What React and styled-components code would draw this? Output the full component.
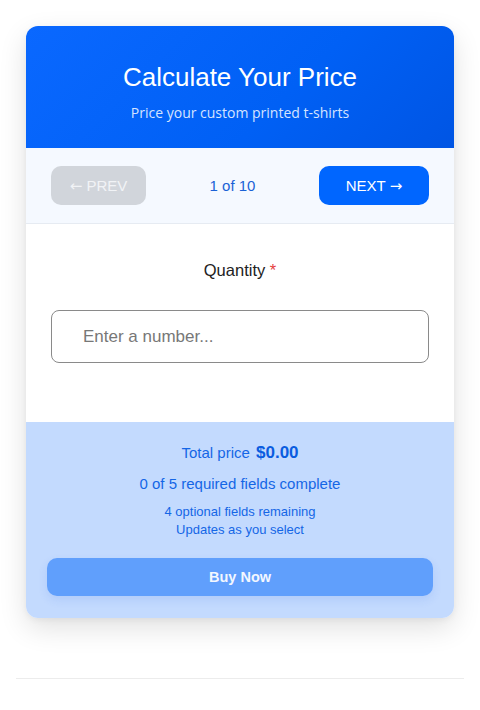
import styled, { createGlobalStyle } from "styled-components";

const Global = createGlobalStyle`
  body {
    margin: 0;
    background: #ffffff;
    font-family: "Liberation Sans", Arial, sans-serif;
  }
`;

const Page = styled.div`
  padding: 26px 16px 0;
`;

const Card = styled.section`
  margin: 0 10px;
  border-radius: 12px;
  overflow: hidden;
  background: #ffffff;
  box-shadow: 0 10px 28px rgba(0, 0, 0, 0.12), 0 2px 6px rgba(0, 0, 0, 0.05);
`;

const Header = styled.header`
  height: 122px;
  box-sizing: border-box;
  padding-top: 36px;
  text-align: center;
  color: #fff;
  background: linear-gradient(135deg, #0a68ff 0%, #0060f5 60%, #0055e4 100%);
`;

const Title = styled.h1`
  margin: 0;
  font-size: 26px;
  font-weight: 400;
  line-height: 30px;
`;

const Subtitle = styled.p`
  margin: 12px 0 0;
  font-family: "Open Sans", "Noto Sans", sans-serif;
  font-size: 14px;
  line-height: 18px;
  color: #d6e4ff;
`;

const Nav = styled.nav`
  display: flex;
  align-items: center;
  justify-content: space-between;
  padding: 18px 25px;
  background: #f5f9ff;
  border-bottom: 1px solid #e6ebf2;
`;

const NavButton = styled.button`
  height: 39px;
  width: ${(p) => p.$width}px;
  border: none;
  border-radius: 10px;
  font-family: "Liberation Sans", Arial, sans-serif;
  font-size: 15px;
  color: ${(p) => (p.disabled ? "#f1f3f6" : "#ffffff")};
  background: ${(p) => (p.disabled ? "#d1d5db" : "#0066ff")};
  cursor: ${(p) => (p.disabled ? "default" : "pointer")};
`;

const Arrow = styled.span`
  font-family: "DejaVu Sans", sans-serif;
  font-size: 15px;
`;

const Step = styled.span`
  font-size: 15px;
  color: #1a62d6;
`;

const Body = styled.div`
  height: 198px;
  box-sizing: border-box;
  padding: 36px 25px 0;
`;

const Label = styled.div`
  text-align: center;
  font-size: 16.5px;
  line-height: 20px;
  color: #222;
`;

const Star = styled.span`
  color: #e53e3e;
`;

const Input = styled.input`
  display: block;
  box-sizing: border-box;
  width: 100%;
  height: 53px;
  margin-top: 30px;
  padding: 0 31px;
  border: 1px solid #8a8a8a;
  border-radius: 8px;
  font-family: "Liberation Sans", Arial, sans-serif;
  font-size: 17px;
  color: #222;
  &::placeholder {
    color: #777;
  }
`;

const Footer = styled.div`
  background: #c3dafe;
  padding: 20px 21px 22px;
  text-align: center;
  color: #1466e6;
`;

const Total = styled.div`
  font-size: 15px;
  line-height: 22px;
  strong {
    font-size: 17px;
    color: #0a5ce0;
    margin-left: 2px;
  }
`;

const Required = styled.div`
  margin-top: 10px;
  font-size: 15px;
  line-height: 20px;
`;

const Small = styled.div`
  margin-top: 9px;
  font-size: 13px;
  line-height: 18px;
`;

const BuyButton = styled.button`
  display: block;
  width: 100%;
  height: 38px;
  margin-top: 19px;
  border: none;
  border-radius: 10px;
  font-family: "Liberation Sans", Arial, sans-serif;
  font-size: 14.5px;
  font-weight: 700;
  color: #f3f7ff;
  background: #609ffc;
  box-shadow: 0 4px 10px rgba(40, 100, 220, 0.12);
`;

const Rule = styled.hr`
  margin: 60px 0 0;
  border: none;
  border-top: 1px solid #ececec;
`;

export default function App() {
  return (
    <>
      <Global />
      <Page>
        <Card>
          <Header>
            <Title>Calculate Your Price</Title>
            <Subtitle>Price your custom printed t-shirts</Subtitle>
          </Header>
          <Nav>
            <NavButton $width={95} disabled>
              <Arrow>←</Arrow> PREV
            </NavButton>
            <Step>1 of 10</Step>
            <NavButton $width={110}>
              NEXT <Arrow>→</Arrow>
            </NavButton>
          </Nav>
          <Body>
            <Label>
              Quantity <Star>*</Star>
            </Label>
            <Input type="number" placeholder="Enter a number..." />
          </Body>
          <Footer>
            <Total>
              Total price <strong>$0.00</strong>
            </Total>
            <Required>0 of 5 required fields complete</Required>
            <Small>
              4 optional fields remaining
              <br />
              Updates as you select
            </Small>
            <BuyButton>Buy Now</BuyButton>
          </Footer>
        </Card>
        <Rule />
      </Page>
    </>
  );
}
